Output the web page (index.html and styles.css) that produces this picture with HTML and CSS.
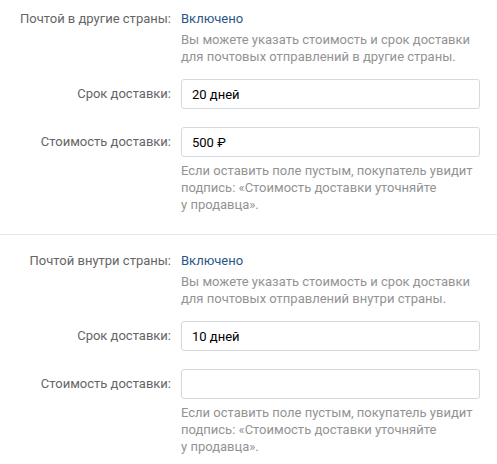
FILE: index.html
```html
<!DOCTYPE html>
<html lang="ru">
<head>
  <meta charset="UTF-8">
  <meta name="viewport" content="width=device-width, initial-scale=1.0">
  <title>Доставка</title>
  <link rel="stylesheet" href="styles.css">
</head>
<body>
  <div class="section first">
    <div class="row">
      <div class="label">Почтой в другие страны:</div>
      <div class="field">
        <a href="#" class="toggle">Включено</a>
        <div class="desc">Вы можете указать стоимость и срок доставки<br>для почтовых отправлений в другие страны.</div>
      </div>
    </div>
    <div class="row input-row">
      <div class="label boxed">Срок доставки:</div>
      <div class="field">
        <input type="text" class="text" value="20 дней">
      </div>
    </div>
    <div class="row input-row">
      <div class="label boxed">Стоимость доставки:</div>
      <div class="field">
        <input type="text" class="text" value="500 ₽">
        <div class="hint">Если оставить поле пустым, покупатель увидит<br>подпись: «Стоимость доставки уточняйте<br>у продавца».</div>
      </div>
    </div>
  </div>

  <div class="section">
    <div class="row">
      <div class="label">Почтой внутри страны:</div>
      <div class="field">
        <a href="#" class="toggle">Включено</a>
        <div class="desc">Вы можете указать стоимость и срок доставки<br>для почтовых отправлений внутри страны.</div>
      </div>
    </div>
    <div class="row input-row">
      <div class="label boxed">Срок доставки:</div>
      <div class="field">
        <input type="text" class="text" value="10 дней">
      </div>
    </div>
    <div class="row input-row">
      <div class="label boxed">Стоимость доставки:</div>
      <div class="field">
        <input type="text" class="text" value="">
        <div class="hint">Если оставить поле пустым, покупатель увидит<br>подпись: «Стоимость доставки уточняйте<br>у продавца».</div>
      </div>
    </div>
  </div>
</body>
</html>
```

FILE: styles.css
```css
body {
  margin: 0;
  background: #fff;
  font-family: Roboto, "Open Sans", Arial, sans-serif;
  font-size: 13px;
  line-height: 17px;
  color: #000;
}
.section {
  padding: 17px 0 21px;
  border-bottom: 1px solid #e7e8ec;
}
.section.first {
  padding-top: 10px;
}
.section:last-child {
  border-bottom: none;
}
.row {
  display: flex;
}
.input-row {
  margin-top: 18px;
}
.section .row:nth-child(2) {
  margin-top: 14px;
}
.label {
  width: 171px;
  flex-shrink: 0;
  text-align: right;
  color: #656565;
  padding-right: 10px;
}
.label.boxed {
  line-height: 30px;
}
.field {
  width: 299px;
}
.toggle {
  color: #2a5885;
  text-decoration: none;
}
.desc,
.hint {
  color: #939393;
}
.desc {
  margin-top: 4px;
}
.hint {
  margin-top: 5px;
}
.text {
  display: block;
  box-sizing: border-box;
  width: 100%;
  height: 30px;
  margin: 0;
  padding: 0 10px;
  border: 1px solid #d3d9de;
  border-radius: 3px;
  font-family: inherit;
  font-size: 13px;
  color: #000;
  outline: none;
}
```
